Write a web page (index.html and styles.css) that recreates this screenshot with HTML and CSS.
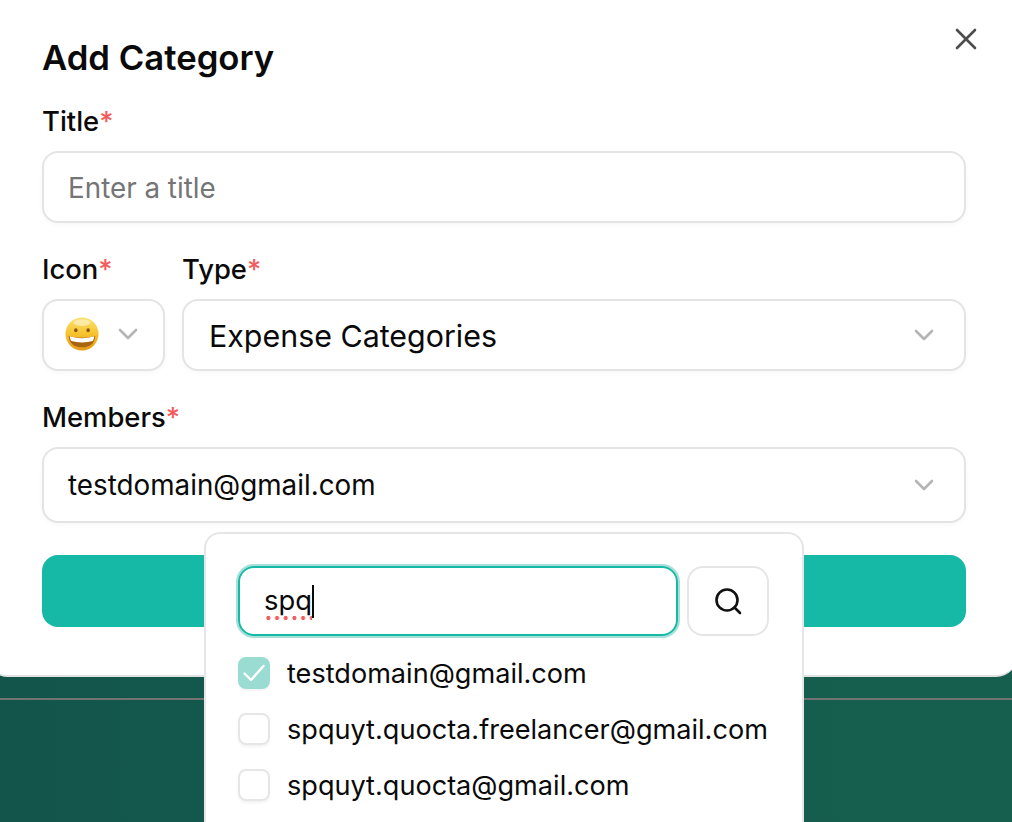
FILE: index.html
```html
<!DOCTYPE html>
<html lang="en">
<head>
  <meta charset="UTF-8">
  <title>Add Category</title>
  <link rel="stylesheet" href="styles.css">
</head>
<body>

  <div class="modal">
    <button class="close" aria-label="Close">
      <svg width="24" height="24" viewBox="0 0 24 24"><path d="M3 3L21 21M21 3L3 21" fill="none" stroke="#4d4d4d" stroke-width="2.6" stroke-linecap="round"/></svg>
    </button>

    <h1>Add Category</h1>

    <label class="label">Title<span class="req">*</span></label>
    <input class="field" type="text" placeholder="Enter a title">

    <div class="row">
      <div class="col-icon">
        <label class="label">Icon<span class="req">*</span></label>
        <div class="field select icon-select">
          <svg class="emoji" width="34" height="34" viewBox="0 0 36 36">
            <defs>
              <linearGradient id="face" x1="0" y1="0" x2="0" y2="1">
                <stop offset="0" stop-color="#fbe26e"/>
                <stop offset="0.5" stop-color="#f6c22d"/>
                <stop offset="1" stop-color="#e79a16"/>
              </linearGradient>
            </defs>
            <circle cx="18" cy="18" r="17.500" fill="url(#face)"/>
            <ellipse cx="18" cy="6" rx="9" ry="3.5" fill="#fff" opacity="0.45"/>
            <ellipse cx="11.5" cy="14" rx="1.8" ry="2.2" fill="#8a5412"/>
            <ellipse cx="24.5" cy="14" rx="1.8" ry="2.2" fill="#8a5412"/>
            <path d="M4 20Q18 24 32 20Q31 32 18 32Q5 32 4 20Z" fill="#a8650f"/>
            <path d="M5 20.500Q18 24.500 31 20.500Q30.500 24 29.500 25.500Q18 28.500 6.500 25.500Q5.500 24 5 20.500Z" fill="#fff"/>
          </svg>
          <svg class="chev" width="20" height="12" viewBox="0 0 20 12"><path d="M2 2L10 10L18 2" fill="none" stroke="#b5b5b5" stroke-width="2.600" stroke-linecap="round" stroke-linejoin="round"/></svg>
        </div>
      </div>
      <div class="col-type">
        <label class="label">Type<span class="req">*</span></label>
        <div class="field select type-select">
          <span>Expense Categories</span>
          <svg class="chev" width="20" height="12" viewBox="0 0 20 12"><path d="M2 2L10 10L18 2" fill="none" stroke="#b5b5b5" stroke-width="2.600" stroke-linecap="round" stroke-linejoin="round"/></svg>
        </div>
      </div>
    </div>

    <label class="label">Members<span class="req">*</span></label>
    <div class="field select members-select">
      <span>testdomain@gmail.com</span>
      <svg class="chev" width="20" height="12" viewBox="0 0 20 12"><path d="M2 2L10 10L18 2" fill="none" stroke="#b5b5b5" stroke-width="2.600" stroke-linecap="round" stroke-linejoin="round"/></svg>
    </div>

    <button class="submit"></button>
  </div>

  <div class="divider"></div>

  <div class="dropdown">
    <div class="search-row">
      <div class="search-input"><span class="typo">spq</span><span class="caret"></span></div>
      <button class="search-btn" aria-label="Search">
        <svg width="28" height="28" viewBox="0 0 28 28"><circle cx="13" cy="13" r="10.500" fill="none" stroke="#111" stroke-width="2.600"/><path d="M20.500 20.500L26 26" fill="none" stroke="#111" stroke-width="2.600" stroke-linecap="round"/></svg>
      </button>
    </div>
    <ul class="options">
      <li>
        <span class="check checked">
          <svg width="24" height="20" viewBox="0 0 24 20"><path d="M2.500 10.500L9 17L21.500 3" fill="none" stroke="#fff" stroke-width="2.400" stroke-linecap="round" stroke-linejoin="round"/></svg>
        </span>
        testdomain@gmail.com
      </li>
      <li><span class="check"></span>spquyt.quocta.freelancer@gmail.com</li>
      <li><span class="check"></span>spquyt.quocta@gmail.com</li>
    </ul>
  </div>

</body>
</html>
```

FILE: styles.css
```css
* {
  box-sizing: border-box;
}

html, body {
  height: 100%;
}

body {
  margin: 0;
  height: 822px;
  overflow: hidden;
  position: relative;
  font-family: Inter, sans-serif;
  color: #0a0a0a;
  background: linear-gradient(90deg, #13554b, #165f4e);
}

.modal {
  position: relative;
  height: 677px;
  margin: 0 -6px 0 -14px;
  padding: 37px 52px 0 56px;
  background: #fff;
  border-radius: 0 0 22px 22px;
  border-bottom: 2px solid #e2e2e2;
}

.close {
  position: absolute;
  top: 27px;
  right: 40px;
  width: 24px;
  height: 24px;
  padding: 0;
  border: none;
  background: none;
}

h1 {
  margin: 0 0 29px;
  font-size: 34.7px;
  line-height: 40px;
  font-weight: 600;
}

.label {
  display: block;
  margin-bottom: 15px;
  font-size: 27.4px;
  line-height: 30px;
  font-weight: 500;
}

.req {
  color: #f25c5c;
}

.field {
  display: block;
  width: 100%;
  height: 72px;
  padding: 2px 24px 0;
  font-family: Inter, sans-serif;
  font-size: 27.8px;
  color: #0a0a0a;
  background: #fff;
  border: 2px solid #e4e4e4;
  border-radius: 16px;
  box-shadow: 0 2px 4px rgba(0, 0, 0, 0.03);
}

.field::placeholder {
  color: #757575;
  opacity: 1;
}

.select {
  display: flex;
  align-items: center;
  justify-content: space-between;
}

.row {
  display: flex;
  gap: 17px;
  margin-top: 31px;
  margin-bottom: 31px;
}

.col-icon {
  width: 123px;
  flex: none;
}

.col-type {
  flex: 1;
}

.icon-select {
  padding: 0 25px 2px 21px;
}

.type-select {
  font-size: 30.4px;
  padding: 2px 30px 0 25px;
}

.type-select .chev {
  margin-top: -2px;
}

.members-select {
  height: 76px;
  padding: 0 30px 0 24px;
}

.submit {
  display: block;
  width: 100%;
  height: 72px;
  margin-top: 32px;
  border: none;
  border-radius: 16px;
  background: #16b8a6;
}

.divider {
  height: 2px;
  margin-top: 21px;
  background: #737373;
}

.dropdown {
  position: absolute;
  top: 532px;
  left: 204px;
  width: 600px;
  height: 310px;
  padding: 32px 32px 0;
  background: #fff;
  border: 2px solid #e6e6e6;
  border-radius: 16px;
}

.search-row {
  display: flex;
  gap: 9px;
}

.search-input {
  display: flex;
  align-items: center;
  width: 440px;
  height: 70px;
  padding: 0 24px;
  font-size: 27.4px;
  border: 2px solid #16b8a6;
  border-radius: 16px;
  box-shadow: 0 0 0 2px #a6e0d8;
}

.typo {
  padding-bottom: 3px;
  background: radial-gradient(circle, #f25c5c 1.8px, transparent 2.2px) 0 100% / 8.700px 4px repeat-x;
}

.caret {
  width: 2px;
  height: 33px;
  background: #0a0a0a;
}

.search-btn {
  display: flex;
  align-items: center;
  justify-content: center;
  width: 82px;
  height: 70px;
  padding: 0;
  background: #fff;
  border: 2px solid #e6e6e6;
  border-radius: 16px;
}

.options {
  margin: 21px 0 0;
  padding: 0;
  list-style: none;
}

.options li {
  display: flex;
  align-items: center;
  gap: 17px;
  height: 32px;
  margin-bottom: 24px;
  font-size: 27.1px;
  white-space: nowrap;
}

.check {
  display: flex;
  align-items: center;
  justify-content: center;
  flex: none;
  width: 32px;
  height: 32px;
  border: 2px solid #e6e6e6;
  border-radius: 8px;
  box-shadow: 0 2px 3px rgba(0, 0, 0, 0.05);
}

.check.checked {
  background: #9bdcd2;
  border-color: #9bdcd2;
}
```
